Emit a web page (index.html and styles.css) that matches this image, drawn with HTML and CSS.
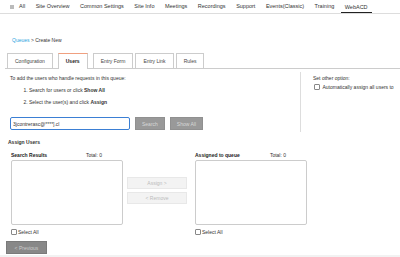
FILE: index.html
```html
<!DOCTYPE html>
<html lang="en">
<head>
    <meta charset="UTF-8">
    <title>WebACD - Create Queue</title>
    <link rel="stylesheet" href="styles.css">
</head>
<body>
    <div class="topnav">
        <span class="grid-icon"></span>
        <span class="nav-item">All</span>
        <span class="nav-item">Site Overview</span>
        <span class="nav-item">Common Settings</span>
        <span class="nav-item">Site Info</span>
        <span class="nav-item">Meetings</span>
        <span class="nav-item">Recordings</span>
        <span class="nav-item">Support</span>
        <span class="nav-item">Events(Classic)</span>
        <span class="nav-item">Training</span>
        <span class="nav-item active">WebACD</span>
    </div>

    <p class="breadcrumb"><a href="#">Queues</a> &gt; Create New</p>

    <div class="tabs">
        <div class="tab">Configuration</div>
        <div class="tab active">Users</div>
        <div class="tab">Entry Form</div>
        <div class="tab">Entry Link</div>
        <div class="tab">Rules</div>
    </div>

    <div class="panel">
        <div class="top-row">
            <div class="left-col">
                <p class="intro">To add the users who handle requests in this queue:</p>
                <ol class="steps">
                    <li>Search for users or click <b>Show All</b></li>
                    <li>Select the user(s) and click <b>Assign</b></li>
                </ol>
                <div class="search-row">
                    <input type="text" class="search-input" value="3jcontrerasc@****].cl">
                    <button class="btn-gray">Search</button>
                    <button class="btn-gray">Show All</button>
                </div>
            </div>
            <div class="right-col">
                <p class="intro">Set other option:</p>
                <label class="check"><span class="box"></span>Automatically assign all users to</label>
            </div>
        </div>

        <h3 class="section-title">Assign Users</h3>
        <div class="assign">
            <div class="list-col">
                <div class="list-head"><b>Search Results</b><span>Total: 0</span></div>
                <div class="list-box"></div>
                <label class="check small"><span class="box"></span>Select All</label>
            </div>
            <div class="mid-buttons">
                <button class="btn-light">Assign &gt;</button>
                <button class="btn-light">&lt; Remove</button>
            </div>
            <div class="list-col">
                <div class="list-head"><b>Assigned to queue</b><span>Total: 0</span></div>
                <div class="list-box"></div>
                <label class="check small"><span class="box"></span>Select All</label>
            </div>
        </div>

        <button class="btn-prev">&lt; Previous</button>
    </div>
    <div class="footer-strip"></div>
</body>
</html>
```

FILE: styles.css
```css
body {
    margin: 0;
    font-family: "Liberation Sans", Arial, sans-serif;
    color: #333;
    background: #fff;
    width: 400px;
    height: 257px;
    overflow: hidden;
    font-size: 5px;
}
.topnav {
    display: flex;
    align-items: center;
    height: 13px;
    border-bottom: 1px solid #ddd;
    padding-left: 10px;
    white-space: nowrap;
    font-size: 5.5px;
}
.grid-icon {
    width: 4px;
    height: 4px;
    background: #bbb;
    margin-right: 5px;
}
.nav-item {
    margin-right: 10.5px;
    height: 13px;
    line-height: 13px;
    box-sizing: border-box;
}
.nav-item.active {
    border-bottom: 1.5px solid #222;
    padding: 0 4px;
    margin-left: -4px;
    line-height: 14px;
}
.breadcrumb {
    margin: 20px 0 0 12px;
    height: 12px;
    line-height: 12px;
    font-size: 5px;
}
.breadcrumb a {
    color: #2a9fe0;
    text-decoration: none;
}
.tabs {
    display: flex;
    margin: 7px 0 0 7px;
    height: 15px;
    gap: 2px;
}
.tab {
    border: 1px solid #ccc;
    border-bottom: none;
    padding: 0 7px;
    line-height: 15px;
    font-size: 5px;
    color: #444;
    background: #fff;
}
.tab.active {
    border-top: 1px solid #f0a080;
    font-weight: bold;
    color: #222;
    padding: 0 7px;
    margin: 0 3px;
    position: relative;
    z-index: 1;
    margin-bottom: -1px;
    height: 16px;
    box-sizing: border-box;
}
.panel {
    border-top: 1px solid #ccc;
    margin: 0 0 0 5px;
}
.top-row {
    display: flex;
    margin-top: 3px;
}
.left-col {
    width: 296px;
    border-right: 1px solid #ddd;
    padding: 2px 0 0 5px;
    height: 60px;
    box-sizing: border-box;
}
.right-col {
    padding: 2px 0 0 12px;
    white-space: nowrap;
    overflow: hidden;
}
.intro {
    margin: 0;
    line-height: 8px;
}
.steps {
    margin: 2px 0 0 0;
    padding-left: 19px;
}
.steps li {
    line-height: 12px;
}
.search-row {
    display: flex;
    gap: 5px;
    margin-top: 9px;
}
.search-input {
    width: 120px;
    height: 13px;
    box-sizing: border-box;
    border: 1px solid #3b7fd4;
    border-radius: 2px;
    padding: 0 2px;
    font-size: 5px;
    font-family: inherit;
    color: #333;
    outline: none;
}
.btn-gray {
    height: 13px;
    padding: 0 6px;
    background: #999;
    color: #d8d8d8;
    border: 1px solid #909090;
    font-size: 5px;
    font-family: inherit;
}
.check {
    display: flex;
    align-items: center;
    line-height: 8px;
    margin-top: 1px;
}
.box {
    width: 3.5px;
    height: 3.5px;
    border: 0.6px solid #888;
    border-radius: 1px;
    margin: 0 3px 0 1px;
    flex: none;
}
.section-title {
    font-size: 5px;
    margin: 6px 0 0 3px;
    line-height: 8px;
}
.assign {
    display: flex;
    margin: 4px 0 0 6px;
}
.list-col {
    width: 112px;
}
.list-head {
    display: flex;
    justify-content: space-between;
    padding-right: 21px;
    line-height: 10px;
}
.list-head b {
    color: #222;
}
.list-box {
    height: 63px;
    border: 1px solid #ccc;
    border-radius: 2px;
}
.check.small {
    margin-top: 3px;
}
.check.small .box {
    width: 4px;
    height: 4px;
    margin: 0 1px 0 0;
}
.mid-buttons {
    display: flex;
    flex-direction: column;
    gap: 3px;
    margin: 27px 8px 0 4px;
}
.btn-light {
    width: 60px;
    height: 12px;
    background: #f3f3f3;
    border: 1px solid #e8e8e8;
    color: #bbb;
    font-size: 5px;
    font-family: inherit;
}
.btn-prev {
    display: block;
    margin: 5px 0 0 1px;
    width: 41px;
    height: 13px;
    background: #888;
    border: 1px solid #7a7a7a;
    color: #ccc;
    font-size: 5px;
    font-family: inherit;
}
.footer-strip {
    height: 4px;
    background: #f2f2f2;
    margin-top: 1px;
}
```
